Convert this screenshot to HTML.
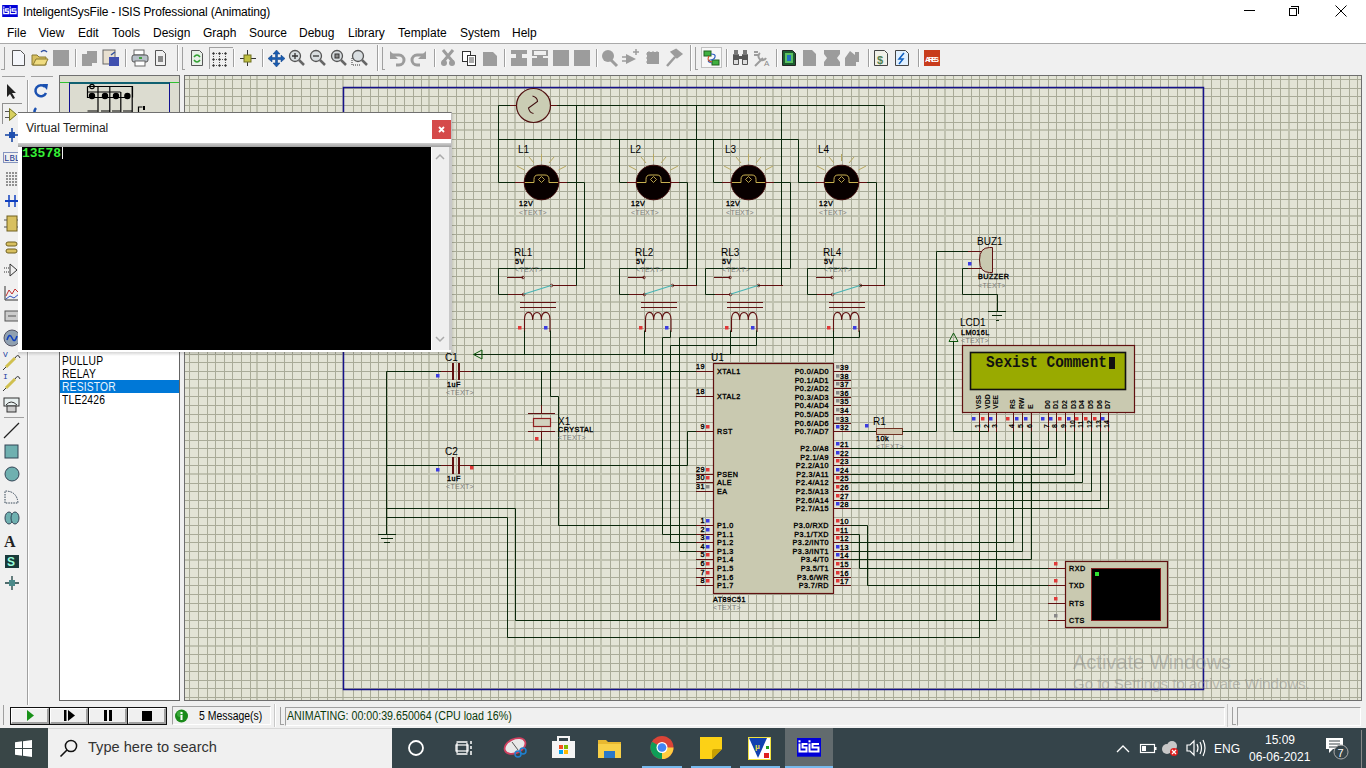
<!DOCTYPE html><html><head><meta charset="utf-8"><style>
*{margin:0;padding:0;box-sizing:border-box}
html,body{width:1366px;height:768px;overflow:hidden;background:#f0f0f0;font-family:"Liberation Sans", sans-serif;position:relative}
.a{position:absolute}
.t{position:absolute;white-space:nowrap;line-height:1}
svg text{font-family:"Liberation Sans", sans-serif}
</style></head><body>
<div class="a" style="left:0;top:0;width:1366px;height:43px;background:#fff"></div><div class="a" style="left:0;top:43px;width:1366px;height:1px;background:#a9a9a9"></div><svg class="a" style="left:2px;top:5px" width="16" height="12" viewBox="0 0 24.25 18.7"><rect width="24.25" height="18.7" fill="#0000d8"/><path d="M2.5 5.5V13.5H9.5V9.5H5.5V6H10.5M12.5 5.5V13.5H21.5V9.5H15.5V6H22" fill="none" stroke="#fff" stroke-width="2"/><rect x="1.5" y="2.3" width="2" height="2" fill="#fff"/><rect x="11.5" y="2.3" width="2" height="2" fill="#fff"/></svg><div class="t" style="left:23px;top:6px;font-size:12px;color:#000;letter-spacing:-0.17px">InteligentSysFile - ISIS Professional (Animating)</div><div class="a" style="left:1244px;top:10px;width:11px;height:1px;background:#000"></div><div class="a" style="left:1291px;top:6px;width:8px;height:8px;border:1px solid #000;border-left:none;border-bottom:none"></div><div class="a" style="left:1289px;top:8px;width:8px;height:8px;border:1px solid #000"></div><svg class="a" style="left:1335px;top:5px" width="12" height="12"><path d="M0.5 .5L11.5 11.5M11.5 .5L.5 11.5" stroke="#000" stroke-width="1"/></svg><div class="t" style="left:7px;top:27px;font-size:12px;color:#000">File</div><div class="t" style="left:38.5px;top:27px;font-size:12px;color:#000">View</div><div class="t" style="left:78px;top:27px;font-size:12px;color:#000">Edit</div><div class="t" style="left:112px;top:27px;font-size:12px;color:#000">Tools</div><div class="t" style="left:153px;top:27px;font-size:12px;color:#000">Design</div><div class="t" style="left:203px;top:27px;font-size:12px;color:#000">Graph</div><div class="t" style="left:249px;top:27px;font-size:12px;color:#000">Source</div><div class="t" style="left:299px;top:27px;font-size:12px;color:#000">Debug</div><div class="t" style="left:348px;top:27px;font-size:12px;color:#000">Library</div><div class="t" style="left:398px;top:27px;font-size:12px;color:#000">Template</div><div class="t" style="left:460px;top:27px;font-size:12px;color:#000">System</div><div class="t" style="left:512px;top:27px;font-size:12px;color:#000">Help</div><div class="a" style="left:184px;top:75px;width:1178px;height:626px;background:#e3e4d6;border:1px solid #6e6e6e"></div><svg class="a" style="left:0;top:0" width="1366" height="768" shape-rendering="crispEdges"><g fill="#c0c2b0"><rect x="256" y="76" width="2" height="624"/><rect x="342" y="76" width="2" height="624"/><rect x="428" y="76" width="2" height="624"/><rect x="514" y="76" width="2" height="624"/><rect x="600" y="76" width="2" height="624"/><rect x="686" y="76" width="2" height="624"/><rect x="772" y="76" width="2" height="624"/><rect x="858" y="76" width="2" height="624"/><rect x="944" y="76" width="2" height="624"/><rect x="1030" y="76" width="2" height="624"/><rect x="1116" y="76" width="2" height="624"/><rect x="1202" y="76" width="2" height="624"/><rect x="1288" y="76" width="2" height="624"/><rect x="185" y="129" width="1176" height="2"/><rect x="185" y="215" width="1176" height="2"/><rect x="185" y="301" width="1176" height="2"/><rect x="185" y="387" width="1176" height="2"/><rect x="185" y="473" width="1176" height="2"/><rect x="185" y="559" width="1176" height="2"/><rect x="185" y="645" width="1176" height="2"/></g><path d="M189.5 76V700M198.5 76V700M207.5 76V700M215.5 76V700M224.5 76V700M232.5 76V700M241.5 76V700M250.5 76V700M267.5 76V700M275.5 76V700M284.5 76V700M292.5 76V700M301.5 76V700M310.5 76V700M318.5 76V700M327.5 76V700M335.5 76V700M353.5 76V700M361.5 76V700M370.5 76V700M378.5 76V700M387.5 76V700M395.5 76V700M404.5 76V700M413.5 76V700M421.5 76V700M438.5 76V700M447.5 76V700M456.5 76V700M464.5 76V700M473.5 76V700M481.5 76V700M490.5 76V700M498.5 76V700M507.5 76V700M524.5 76V700M533.5 76V700M541.5 76V700M550.5 76V700M559.5 76V700M567.5 76V700M576.5 76V700M584.5 76V700M593.5 76V700M610.5 76V700M619.5 76V700M627.5 76V700M636.5 76V700M644.5 76V700M653.5 76V700M662.5 76V700M670.5 76V700M679.5 76V700M696.5 76V700M705.5 76V700M713.5 76V700M722.5 76V700M730.5 76V700M739.5 76V700M748.5 76V700M756.5 76V700M765.5 76V700M781.5 76V700M790.5 76V700M798.5 76V700M807.5 76V700M816.5 76V700M825.5 76V700M833.5 76V700M842.5 76V700M851.5 76V700M868.5 76V700M876.5 76V700M884.5 76V700M893.5 76V700M902.5 76V700M911.5 76V700M919.5 76V700M928.5 76V700M936.5 76V700M953.5 76V700M962.5 76V700M971.5 76V700M979.5 76V700M988.5 76V700M996.5 76V700M1005.5 76V700M1013.5 76V700M1022.5 76V700M1039.5 76V700M1048.5 76V700M1056.5 76V700M1065.5 76V700M1074.5 76V700M1082.5 76V700M1091.5 76V700M1100.5 76V700M1108.5 76V700M1125.5 76V700M1134.5 76V700M1142.5 76V700M1151.5 76V700M1160.5 76V700M1168.5 76V700M1177.5 76V700M1185.5 76V700M1194.5 76V700M1211.5 76V700M1220.5 76V700M1228.5 76V700M1237.5 76V700M1246.5 76V700M1254.5 76V700M1263.5 76V700M1271.5 76V700M1280.5 76V700M1297.5 76V700M1306.5 76V700M1314.5 76V700M1323.5 76V700M1331.5 76V700M1340.5 76V700M1349.5 76V700M1357.5 76V700M185 79.5H1361M185 88.5H1361M185 96.5H1361M185 105.5H1361M185 113.5H1361M185 122.5H1361M185 139.5H1361M185 148.5H1361M185 156.5H1361M185 165.5H1361M185 173.5H1361M185 182.5H1361M185 191.5H1361M185 199.5H1361M185 208.5H1361M185 225.5H1361M185 234.5H1361M185 242.5H1361M185 251.5H1361M185 259.5H1361M185 268.5H1361M185 276.5H1361M185 285.5H1361M185 294.5H1361M185 311.5H1361M185 319.5H1361M185 328.5H1361M185 337.5H1361M185 345.5H1361M185 354.5H1361M185 362.5H1361M185 371.5H1361M185 379.5H1361M185 396.5H1361M185 405.5H1361M185 414.5H1361M185 422.5H1361M185 431.5H1361M185 440.5H1361M185 448.5H1361M185 457.5H1361M185 465.5H1361M185 483.5H1361M185 491.5H1361M185 500.5H1361M185 508.5H1361M185 517.5H1361M185 525.5H1361M185 534.5H1361M185 542.5H1361M185 551.5H1361M185 568.5H1361M185 577.5H1361M185 585.5H1361M185 594.5H1361M185 603.5H1361M185 611.5H1361M185 620.5H1361M185 628.5H1361M185 637.5H1361M185 654.5H1361M185 663.5H1361M185 671.5H1361M185 680.5H1361M185 688.5H1361M185 697.5H1361" stroke="#a9ab98" stroke-width="1" fill="none"/></svg><div class="a" style="left:0;top:44px;width:1366px;height:31px;background:#f0f0f0"></div><svg class="a" style="left:0;top:0" width="960" height="76"><rect x="4" y="47" width="1" height="22" fill="#a0a0a0"/><rect x="1" y="69" width="4" height="1" fill="#a0a0a0"/><rect x="75" y="49" width="1" height="18" fill="#a0a0a0"/><rect x="76" y="49" width="1" height="18" fill="#fff"/><rect x="125" y="49" width="1" height="18" fill="#a0a0a0"/><rect x="126" y="49" width="1" height="18" fill="#fff"/><rect x="233" y="49" width="1" height="18" fill="#a0a0a0"/><rect x="234" y="49" width="1" height="18" fill="#fff"/><rect x="262" y="49" width="1" height="18" fill="#a0a0a0"/><rect x="263" y="49" width="1" height="18" fill="#fff"/><rect x="434" y="49" width="1" height="18" fill="#a0a0a0"/><rect x="435" y="49" width="1" height="18" fill="#fff"/><rect x="504" y="49" width="1" height="18" fill="#a0a0a0"/><rect x="505" y="49" width="1" height="18" fill="#fff"/><rect x="596" y="49" width="1" height="18" fill="#a0a0a0"/><rect x="597" y="49" width="1" height="18" fill="#fff"/><rect x="726" y="49" width="1" height="18" fill="#a0a0a0"/><rect x="727" y="49" width="1" height="18" fill="#fff"/><rect x="776" y="49" width="1" height="18" fill="#a0a0a0"/><rect x="777" y="49" width="1" height="18" fill="#fff"/><rect x="868" y="49" width="1" height="18" fill="#a0a0a0"/><rect x="869" y="49" width="1" height="18" fill="#fff"/><rect x="918" y="49" width="1" height="18" fill="#a0a0a0"/><rect x="919" y="49" width="1" height="18" fill="#fff"/><rect x="177" y="45" width="1" height="26" fill="#a0a0a0"/><rect x="178" y="45" width="1" height="26" fill="#fff"/><rect x="182" y="47" width="1" height="22" fill="#a0a0a0"/><rect x="182" y="69" width="3" height="1" fill="#a0a0a0"/><rect x="377" y="45" width="1" height="26" fill="#a0a0a0"/><rect x="378" y="45" width="1" height="26" fill="#fff"/><rect x="382" y="47" width="1" height="22" fill="#a0a0a0"/><rect x="382" y="69" width="3" height="1" fill="#a0a0a0"/><rect x="690" y="45" width="1" height="26" fill="#a0a0a0"/><rect x="691" y="45" width="1" height="26" fill="#fff"/><rect x="695" y="47" width="1" height="22" fill="#a0a0a0"/><rect x="695" y="69" width="3" height="1" fill="#a0a0a0"/><path d="M12.5 50.5h8l4 4v11h-12z" fill="#f4f6fa" stroke="#555"/><path d="M32 55h5l2 2h7v8H32z" fill="#d8c060" stroke="#8a7a30"/><path d="M33 65l3-6h12l-3 6z" fill="#f0dc80" stroke="#8a7a30"/><path d="M41 52q3-3 6 0" stroke="#3050a0" fill="none" stroke-width="1.5"/><rect x="53" y="50" width="16" height="16" fill="#9c9c9c"/><path d="M82 54h5v-3h10v12h-5v3H82z" fill="#9c9c9c"/><rect x="103" y="50" width="12" height="14" fill="#e8e0d0" stroke="#666"/><rect x="109" y="57" width="10" height="9" fill="#4050b0"/><path d="M111 55l4-3" stroke="#3050a0" stroke-width="1.5"/><rect x="134" y="50" width="10" height="5" fill="#fff" stroke="#666"/><rect x="132" y="55" width="16" height="7" rx="2" fill="#b8c0c8" stroke="#555"/><rect x="135" y="61" width="10" height="5" fill="#fff" stroke="#666"/><rect x="139" y="57" width="3" height="2" fill="#40a040"/><path d="M155.5 50.5h7l3 3v12h-10z" fill="#f0f0f0" stroke="#555"/><rect x="158" y="56" width="5" height="6" fill="#888"/><path d="M191.5 50.5h8l3 3v12h-11z" fill="#e8f0e8" stroke="#555"/><path d="M194 57q3-4 6 0M200 60q-3 4-6 0" stroke="#30a030" stroke-width="1.6" fill="none"/><rect x="209" y="47" width="24" height="1" fill="#a0a0a0"/><rect x="209" y="47" width="1" height="22" fill="#a0a0a0"/><path d="M213.5 52l1.5 1.5-1.5 1.5-1.5-1.5z" fill="#333"/><rect x="216" y="53" width="1" height="1" fill="#555"/><rect x="213" y="56" width="1" height="1" fill="#555"/><path d="M219.5 52l1.5 1.5-1.5 1.5-1.5-1.5z" fill="#333"/><rect x="222" y="53" width="1" height="1" fill="#555"/><rect x="219" y="56" width="1" height="1" fill="#555"/><path d="M225.5 52l1.5 1.5-1.5 1.5-1.5-1.5z" fill="#333"/><rect x="225" y="56" width="1" height="1" fill="#555"/><path d="M213.5 58l1.5 1.5-1.5 1.5-1.5-1.5z" fill="#333"/><rect x="216" y="59" width="1" height="1" fill="#555"/><rect x="213" y="62" width="1" height="1" fill="#555"/><path d="M219.5 58l1.5 1.5-1.5 1.5-1.5-1.5z" fill="#333"/><rect x="222" y="59" width="1" height="1" fill="#555"/><rect x="219" y="62" width="1" height="1" fill="#555"/><path d="M225.5 58l1.5 1.5-1.5 1.5-1.5-1.5z" fill="#333"/><rect x="225" y="62" width="1" height="1" fill="#555"/><path d="M213.5 64l1.5 1.5-1.5 1.5-1.5-1.5z" fill="#333"/><rect x="216" y="65" width="1" height="1" fill="#555"/><path d="M219.5 64l1.5 1.5-1.5 1.5-1.5-1.5z" fill="#333"/><rect x="222" y="65" width="1" height="1" fill="#555"/><path d="M225.5 64l1.5 1.5-1.5 1.5-1.5-1.5z" fill="#333"/><path d="M247.5 50v16M240 58.5h16" stroke="#333" stroke-width="1"/><rect x="244" y="55" width="7" height="7" fill="#c0c040" stroke="#707020"/><path d="M276.5 50l3.5 4h-2.5v3.5h3.5V55l4 3.5-4 3.5v-2.5h-3.5V63h2.5l-3.5 4-3.5-4h2.5v-3.5h-3.5V62l-4-3.5 4-3.5v2.5h3.5V54h-2.5z" fill="#1a5cb0" stroke="#0c3c80" stroke-width=".5"/><circle cx="295" cy="56" r="5.5" fill="#d8dde0" stroke="#555" stroke-width="1.3"/><path d="M299 60l5 5" stroke="#666" stroke-width="2.5"/><path d="M292 56h6M295 53v6" stroke="#333" stroke-width="1.3"/><circle cx="316" cy="56" r="5.5" fill="#d8dde0" stroke="#555" stroke-width="1.3"/><path d="M320 60l5 5" stroke="#666" stroke-width="2.5"/><path d="M313 56h6" stroke="#333" stroke-width="1.3"/><circle cx="337" cy="56" r="5.5" fill="#d8dde0" stroke="#555" stroke-width="1.3"/><path d="M341 60l5 5" stroke="#666" stroke-width="2.5"/><rect x="335" y="54" width="4" height="4" fill="#888" stroke="#333"/><circle cx="358" cy="56" r="5.5" fill="#d8dde0" stroke="#555" stroke-width="1.3"/><path d="M362 60l5 5" stroke="#666" stroke-width="2.5"/><path d="M352 58v7h8" stroke="#333" stroke-dasharray="1 1" fill="none"/><path d="M392 55h7a5 5 0 010 10h-3" stroke="#9c9c9c" stroke-width="3" fill="none"/><path d="M390 51v8h8z" fill="#9c9c9c"/><path d="M424 55h-7a5 5 0 000 10h3" stroke="#9c9c9c" stroke-width="3" fill="none"/><path d="M426 51v8h-8z" fill="#9c9c9c"/><path d="M443 50l10 12M453 50l-10 12" stroke="#9c9c9c" stroke-width="3"/><circle cx="444" cy="63" r="3" fill="#9c9c9c"/><circle cx="452" cy="63" r="3" fill="#9c9c9c"/><rect x="462.5" y="51.5" width="8" height="10" fill="#fff" stroke="#333"/><rect x="467.5" y="55.5" width="8" height="10" fill="#fff" stroke="#333"/><path d="M469 58h5M469 60h5M469 62h5" stroke="#555"/><path d="M483 52h10l4 4v10h-14z" fill="#9c9c9c"/><path d="M511 50h16v4h-5v4h5v8h-16v-8h5v-4h-5z" fill="#9c9c9c"/><path d="M532 50h16v6h-5v2h5v8h-16v-8h5v-2h-5z" fill="#9c9c9c"/><rect x="534" y="51" width="12" height="4" fill="#f0f0f0"/><rect x="553" y="50" width="16" height="16" fill="#9c9c9c"/><rect x="574" y="50" width="16" height="16" fill="#9c9c9c"/><circle cx="608" cy="56" r="6" fill="#9c9c9c"/><path d="M611 60l6 6" stroke="#9c9c9c" stroke-width="3"/><path d="M626 54l10 5-10 5z" fill="#9c9c9c"/><path d="M622 57h4M622 61h4M633 52h6M636 49v6" stroke="#9c9c9c" stroke-width="1.5"/><rect x="647" y="52" width="12" height="12" fill="#9c9c9c"/><path d="M646 54h14M646 58h14M646 62h14M649 51v14M653 51v14M657 51v14" stroke="#9c9c9c" stroke-dasharray="1 1"/><path d="M667 66l8-9M672 52l5 5 4-3-5-4z" stroke="#9c9c9c" stroke-width="2.5" fill="#9c9c9c"/><rect x="701.5" y="47.5" width="20" height="20" fill="#f8f8f8" stroke="#c0c0c0"/><rect x="704" y="51" width="7" height="5" fill="#40b040" stroke="#206020"/><rect x="712" y="60" width="7" height="5" fill="#40b040" stroke="#206020"/><path d="M711 54q5 0 4 3t-5 3q-4 2 2 3" stroke="#3060c0" stroke-width="1.2" fill="none"/><path d="M709 56q-3 5 3 6" stroke="#d05020" stroke-width="1.2" fill="none"/><rect x="733" y="54" width="6" height="11" rx="1" fill="#555"/><rect x="742" y="54" width="6" height="11" rx="1" fill="#555"/><rect x="738" y="56" width="5" height="3" fill="#555"/><rect x="734" y="50" width="4" height="5" fill="#777"/><rect x="743" y="50" width="4" height="5" fill="#777"/><rect x="734" y="60" width="4" height="4" fill="#ddd"/><rect x="743" y="60" width="4" height="4" fill="#ddd"/><path d="M754 52h4M754 55h4M755 66l8-8M760 53a4 4 0 106 5" stroke="#9c9c9c" stroke-width="2" fill="none"/><text x="764" y="66" font-size="8" fill="#888">A</text><path d="M782.5 50.5h10l3 3v12h-13z" fill="#1c5a30" stroke="#222"/><rect x="785" y="53" width="8" height="10" fill="#5ac060"/><rect x="787" y="55" width="4" height="6" fill="#2070c0"/><path d="M803 50h9l4 4v12h-13z" fill="#9c9c9c"/><path d="M824 50h16v4l-3 4 3 4v4h-16v-4l3-4-3-4z" fill="#9c9c9c"/><path d="M845 58l5-7 5 4v-3h4v10h-3v4h-11z" fill="#9c9c9c"/><path d="M874.5 50.5h10l3 3v12h-13z" fill="#f0f0e8" stroke="#444"/><text x="877" y="64" font-size="11" fill="#508050" font-weight="bold">$</text><path d="M895.5 50.5h10l3 3v12h-13z" fill="#e0f0ff" stroke="#444"/><path d="M904 53l-5 6h4l-4 5" stroke="#1060c0" stroke-width="1.5" fill="none"/><rect x="924" y="50" width="16" height="16" fill="#c83c1c"/><text x="925" y="62" font-size="7.5" fill="#fff" font-weight="bold" textLength="14">ARES</text></svg><div class="a" style="left:2px;top:76px;width:23px;height:1px;background:#a0a0a0"></div><div class="a" style="left:31px;top:76px;width:22px;height:1px;background:#a0a0a0"></div><div class="a" style="left:27px;top:80px;width:1px;height:625px;background:#a0a0a0"></div><div class="a" style="left:28px;top:80px;width:1px;height:625px;background:#fff"></div><div class="a" style="left:59px;top:75px;width:121px;height:60px;background:#dcdcd0;border:1px solid #707070"></div><div class="a" style="left:60px;top:82px;width:119px;height:1px;background:#30c030"></div><div class="a" style="left:69px;top:82px;width:101px;height:40px;border:1px solid #101090;border-top:2px solid #106070;border-bottom:none"></div><svg class="a" style="left:0;top:0" width="180" height="115"><g stroke="#000" fill="none" stroke-width="1.2"><path d="M87.5 86.5h45v11M87.5 86.5v11h41M87.5 92h33M98 86.5v26M109.8 86.5v26M120.8 92v20.5M132.2 86.5v26"/><circle cx="92" cy="86.5" r="2.2"/><circle cx="92" cy="96" r="2.6" fill="#000"/><circle cx="105" cy="96" r="2.6" fill="#000"/><circle cx="116" cy="96" r="2.6" fill="#000"/><circle cx="127.4" cy="96" r="2.6" fill="#000"/><path d="M87.5 111h10M101 111h9M112 111h8M123 111h9M138.5 112v-5h4"/></g><rect x="143" y="106" width="2" height="4" fill="#000"/></svg><div class="a" style="left:59px;top:200px;width:121px;height:501px;background:#fff;border:1px solid #646464"></div><div class="a" style="left:60px;top:380px;width:119px;height:13px;background:#0078d7"></div><div class="t" style="left:62px;top:355px;font-size:12px;color:#000;letter-spacing:0.2px;transform:scaleX(0.86);transform-origin:0 0">PULLUP</div><div class="t" style="left:62px;top:368px;font-size:12px;color:#000;letter-spacing:0.2px;transform:scaleX(0.86);transform-origin:0 0">RELAY</div><div class="t" style="left:62px;top:381px;font-size:12px;color:#e8f4ff;letter-spacing:0.2px;transform:scaleX(0.86);transform-origin:0 0">RESISTOR</div><div class="t" style="left:62px;top:394px;font-size:12px;color:#000;letter-spacing:0.2px;transform:scaleX(0.86);transform-origin:0 0">TLE2426</div><svg class="a" style="left:0;top:0" width="60" height="600"><path d="M7 84l0 13 3-3 3 5 2-1-3-5h4z" fill="#222"/><rect x="2" y="103" width="20" height="1" fill="#909090"/><rect x="2" y="103" width="1" height="21" fill="#909090"/><path d="M9.5 108.5l7 6-7 6z" fill="#d8d060" stroke="#707020"/><path d="M5 111.5h4M5 117.5h4" stroke="#555"/><path d="M12 128v14M5 135h14" stroke="#1040a0" stroke-width="1.5"/><rect x="9" y="132" width="6" height="6" fill="#2050b0"/><text x="4" y="161" font-size="9" fill="#1a3a90" style="font-family:&quot;Liberation Mono&quot;">LBL</text><rect x="3.5" y="152.5" width="18" height="10" fill="none" stroke="#1a3a90" stroke-dasharray="1 1"/><path d="M6 173h12M6 176h12M6 179h12M6 182h12M6 185h12" stroke="#333" stroke-dasharray="2 1"/><path d="M5 201h15" stroke="#1040c0" stroke-width="2"/><path d="M9 195v12M15 195v12" stroke="#1040c0" stroke-width="1.5"/><rect x="7" y="216" width="10" height="15" fill="#d8c060" stroke="#706020"/><path d="M4 220h3M4 227h3M17 220h3M17 227h3" stroke="#555"/><rect x="6" y="242" width="11" height="4" rx="2" fill="#d8c060" stroke="#706020"/><rect x="6" y="249" width="11" height="4" rx="2" fill="#d8c060" stroke="#706020"/><path d="M10 264l7 6-7 6z" fill="none" stroke="#333"/><path d="M4 268h5M4 272h5" stroke="#333" stroke-dasharray="1 1"/><path d="M5 286v14h15" stroke="#333" fill="none"/><path d="M6 296l3-6 3 4 3-5 3 3" stroke="#c03030" fill="none"/><path d="M6 299l4-3 4 2 5-4" stroke="#3050c0" fill="none"/><rect x="5" y="311" width="15" height="10" fill="#ccc" stroke="#555"/><path d="M8 316h8" stroke="#555"/><circle cx="12" cy="338" r="8" fill="#90a0b0" stroke="#556"/><path d="M7 340q2.5-8 5-2t5-2" stroke="#1040c0" stroke-width="1.5" fill="none"/><text x="3" y="357" font-size="8" fill="#2040a0" style="font-family:&quot;Liberation Mono&quot;">V</text><path d="M6 367l9-9" stroke="#d0c050" stroke-width="3"/><path d="M3 370l3-3M15 358q3-5 5 0" stroke="#333" fill="none"/><text x="3" y="379" font-size="8" fill="#2040a0" style="font-family:&quot;Liberation Mono&quot;">I</text><path d="M6 388l9-9" stroke="#d0c050" stroke-width="3"/><path d="M3 391l3-3M15 379q3-5 5 0" stroke="#333" fill="none"/><rect x="4" y="398" width="15" height="8" fill="#e8f0f0" stroke="#333"/><path d="M6 405q5-6 11 0" stroke="#333" fill="none"/><rect x="7" y="406" width="9" height="6" fill="#ccc" stroke="#333"/><rect x="4" y="417" width="20" height="1" fill="#a0a0a0"/><path d="M4 438l15-15" stroke="#222" stroke-width="1.3"/><rect x="5" y="445" width="13" height="13" fill="#6fb0b0" stroke="#345"/><circle cx="12" cy="474" r="7" fill="#6fb0b0" stroke="#345"/><path d="M5 503v-12q12 0 13 12z" fill="none" stroke="#345" stroke-dasharray="1.5 1"/><ellipse cx="9" cy="518" rx="4" ry="6" fill="#6fb0b0" stroke="#345"/><ellipse cx="15" cy="518" rx="4" ry="6" fill="#6fb0b0" stroke="#345"/><text x="4" y="547" font-size="16" font-weight="bold" style="font-family:&quot;Liberation Serif&quot;" fill="#222">A</text><rect x="5" y="555" width="14" height="13" fill="#1a3a3a"/><text x="7" y="566" font-size="12" font-weight="bold" fill="#9fd">S</text><path d="M12 576v14M5 583h14" stroke="#1a4040" stroke-width="1.3"/><rect x="9" y="580" width="6" height="6" fill="#4a8a8a"/><path d="M45 87a5.5 5.5 0 10 1 6" stroke="#1a50b0" stroke-width="2.5" fill="none"/><path d="M42 84l6 0-1 6z" fill="#1a50b0"/><path d="M35 114a5.5 5.5 0 011-6" stroke="#1a50b0" stroke-width="2.5" fill="none"/></svg><div class="a" style="left:3px;top:705px;width:1px;height:20px;background:#a0a0a0"></div><div class="a" style="left:10px;top:707px;width:157px;height:18px;background:#111"></div><div class="a" style="left:11px;top:708px;width:38px;height:16px;background:#f0f0f0;border-top:1px solid #fff;border-left:1px solid #fff;border-bottom:2px solid #a0a0a0;border-right:2px solid #a0a0a0"></div><div class="a" style="left:50px;top:708px;width:38px;height:16px;background:#f0f0f0;border-top:1px solid #fff;border-left:1px solid #fff;border-bottom:2px solid #a0a0a0;border-right:2px solid #a0a0a0"></div><div class="a" style="left:89px;top:708px;width:38px;height:16px;background:#f0f0f0;border-top:1px solid #fff;border-left:1px solid #fff;border-bottom:2px solid #a0a0a0;border-right:2px solid #a0a0a0"></div><div class="a" style="left:128px;top:708px;width:38px;height:16px;background:#f0f0f0;border-top:1px solid #fff;border-left:1px solid #fff;border-bottom:2px solid #a0a0a0;border-right:2px solid #a0a0a0"></div><svg class="a" style="left:0;top:700px" width="170" height="28"><path d="M27 10l7 5.5-7 5.5z" fill="#189018"/><rect x="64" y="10" width="2.5" height="11" fill="#000"/><path d="M68 10l7 5.5-7 5.5z" fill="#000"/><rect x="104" y="10" width="3" height="11" fill="#000"/><rect x="109" y="10" width="3" height="11" fill="#000"/><rect x="142" y="11" width="10" height="10" fill="#000"/></svg><div class="a" style="left:172px;top:706px;width:99px;height:19px;border-top:1px solid #a0a0a0;border-left:1px solid #a0a0a0;border-bottom:1px solid #fff;border-right:1px solid #fff"></div><svg class="a" style="left:174px;top:708px" width="16" height="16"><circle cx="7.5" cy="8" r="6.5" fill="#1a8a1a"/><circle cx="6" cy="6" r="3" fill="#50c050" opacity=".6"/><rect x="6.5" y="7" width="2" height="5" fill="#fff"/><rect x="6.5" y="4" width="2" height="2" fill="#fff"/></svg><div class="t" style="left:199px;top:710px;font-size:12px;color:#000;transform:scaleX(0.87);transform-origin:0 0">5 Message(s)</div><div class="a" style="left:275px;top:704px;width:1px;height:23px;background:#fff"></div><div class="a" style="left:274px;top:704px;width:1px;height:23px;background:#c8c8c8"></div><div class="a" style="left:280px;top:707px;width:1px;height:18px;background:#a0a0a0"></div><div class="a" style="left:280px;top:724px;width:4px;height:1px;background:#a0a0a0"></div><div class="a" style="left:285px;top:707px;width:940px;height:19px;border-top:1px solid #a0a0a0;border-left:1px solid #a0a0a0;border-bottom:1px solid #fff;border-right:1px solid #fff"></div><div class="t" style="left:287px;top:710px;font-size:12px;color:#0a3a0a;transform:scaleX(0.89);transform-origin:0 0">ANIMATING: 00:00:39.650064 (CPU load 16%)</div><div class="a" style="left:1227px;top:704px;width:1px;height:23px;background:#c8c8c8"></div><div class="a" style="left:1232px;top:707px;width:1px;height:18px;background:#a0a0a0"></div><div class="a" style="left:1232px;top:724px;width:4px;height:1px;background:#a0a0a0"></div><div class="a" style="left:1237px;top:707px;width:124px;height:19px;border-top:1px solid #a0a0a0;border-left:1px solid #a0a0a0;border-bottom:1px solid #fff;border-right:1px solid #fff"></div><div class="a" style="left:0;top:728px;width:1366px;height:40px;background:#35444a"></div><div class="a" style="left:0;top:728px;width:48px;height:40px;background:#394647"></div><svg class="a" style="left:15px;top:740px" width="18" height="17"><path d="M0 2.3L7 1.3V8H0zM8 1.2L17 0V8H8zM0 9h7v6.7L0 14.7zM8 9h9v8l-9-1.2z" fill="#fff"/></svg><div class="a" style="left:48px;top:728px;width:344px;height:40px;background:#f0f0f0;border-top:1px solid #d8d8d8"></div><svg class="a" style="left:58px;top:738px" width="22" height="22"><circle cx="13" cy="8" r="5.6" fill="none" stroke="#111" stroke-width="1.5"/><path d="M9 12L2.5 18.5" stroke="#111" stroke-width="1.6"/></svg><div class="t" style="left:88px;top:740px;font-size:14.6px;color:#333">Type here to search</div><svg class="a" style="left:400px;top:730px" width="480" height="38"><circle cx="16" cy="18" r="7" fill="none" stroke="#fff" stroke-width="1.8"/><path d="M56.5 12h11M56.5 24h11M57 13v10M67 13v10" stroke="#fff" stroke-width="1.3" fill="none"/><rect x="56" y="15" width="12" height="6" fill="none" stroke="#fff" stroke-width="1.2"/><path d="M71 11v3M71 16v3M71 21v4" stroke="#fff" stroke-width="1.5"/><ellipse cx="115" cy="16" rx="11" ry="7" fill="#e8e8e8" stroke="#d04060" stroke-width="1.8" transform="rotate(-25 115 16)"/><path d="M112 12l6 8" stroke="#555"/><circle cx="118" cy="24" r="3" fill="none" stroke="#2080d0" stroke-width="1.5"/><circle cx="123" cy="21" r="3" fill="none" stroke="#2080d0" stroke-width="1.5"/><rect x="152" y="11" width="23" height="17" fill="#f4f4f4"/><path d="M158 11v-4h11v4" stroke="#f4f4f4" stroke-width="2" fill="none"/><rect x="159" y="15" width="4" height="4" fill="#f25022"/><rect x="164" y="15" width="4" height="4" fill="#7fba00"/><rect x="159" y="20" width="4" height="4" fill="#00a4ef"/><rect x="164" y="20" width="4" height="4" fill="#ffb900"/><path d="M198 10h8l2 2h13v16h-23z" fill="#e8b830"/><rect x="198" y="14" width="23" height="14" fill="#f8d048"/><rect x="204" y="21" width="11" height="7" fill="#2a78c8"/></svg><svg class="a" style="left:640px;top:730px" width="200" height="38"><circle cx="22" cy="17.5" r="11.5" fill="#db4437"/><path d="M22 17.5L12.04 23.25A11.5 11.5 0 0 0 22 29z" fill="#0f9d58"/><path d="M22 17.5L12.04 11.75A11.5 11.5 0 0 0 12.04 23.25 L22 29 A11.5 11.5 0 0 0 22 29z" fill="#0f9d58"/><path d="M22 17.5 L33.5 17.5 A11.5 11.5 0 0 1 22 29z" fill="#ffcd40"/><circle cx="22" cy="17.5" r="5.5" fill="#fff"/><circle cx="22" cy="17.5" r="4.3" fill="#4285f4"/><rect x="60" y="7" width="22" height="22" fill="#fcd116"/><path d="M82 19v10H72z" fill="#35444a"/><path d="M72 29l10-10h-8a2 2 0 0 0-2 2z" fill="#c8a000"/><rect x="108" y="7" width="23" height="23" fill="#f0e040"/><rect x="109" y="8" width="21" height="21" fill="#fff"/><path d="M109 8h18l-9 20z" fill="#1040b0"/><text x="115" y="19" font-size="8" fill="#f0e040" font-weight="bold">μ</text><rect x="124" y="23" width="5" height="5" fill="#e02020"/><rect x="126" y="16" width="3" height="3" fill="#20a020"/></svg><div class="a" style="left:785px;top:728px;width:48px;height:40px;background:#626b6e"></div><svg class="a" style="left:797px;top:738px" width="24.25" height="18.7" viewBox="0 0 24.25 18.7"><rect width="24.25" height="18.7" fill="#0000d8"/><path d="M2.5 5.5V13.5H9.5V9.5H5.5V6H10.5M12.5 5.5V13.5H21.5V9.5H15.5V6H22" fill="none" stroke="#fff" stroke-width="2"/><rect x="1.5" y="2.3" width="2" height="2" fill="#fff"/><rect x="11.5" y="2.3" width="2" height="2" fill="#fff"/></svg><div class="a" style="left:642px;top:766px;width:40px;height:2px;background:#76b9ed"></div><div class="a" style="left:691px;top:766px;width:40px;height:2px;background:#76b9ed"></div><div class="a" style="left:740px;top:766px;width:40px;height:2px;background:#76b9ed"></div><div class="a" style="left:785px;top:766px;width:48px;height:2px;background:#76b9ed"></div><svg class="a" style="left:1110px;top:730px" width="256" height="38"><path d="M7 22l6-6 6 6" stroke="#fff" stroke-width="1.3" fill="none"/><rect x="30.5" y="14.5" width="14" height="8" fill="none" stroke="#fff" stroke-width="1.2"/><rect x="45" y="17" width="1.5" height="3" fill="#fff"/><rect x="32" y="16" width="4" height="5" fill="#fff"/><circle cx="57" cy="19" r="5" fill="#c8c8c8"/><circle cx="62" cy="16" r="5" fill="#c8c8c8"/><circle cx="64" cy="22" r="4" fill="#e02020"/><path d="M62 20l4 4M66 20l-4 4" stroke="#fff" stroke-width="1.2"/><path d="M77 15h3l4-4v14l-4-4h-3z" fill="none" stroke="#fff" stroke-width="1.2"/><path d="M87 14q2 4 0 8M90 12q3 6 0 12M93 10q4 8 0 16" stroke="#fff" stroke-width="1.2" fill="none"/><text x="104" y="23" font-size="12" fill="#fff">ENG</text><text x="155" y="14" font-size="12" fill="#fff">15:09</text><text x="139" y="31" font-size="12" fill="#fff">06-06-2021</text><path d="M216 8h17v11h-10l-4 4v-4h-3z" fill="#fff"/><path d="M219 11h11M219 14h11M219 17h8" stroke="#3a464b" stroke-width="1"/><circle cx="231" cy="22" r="7" fill="#35444a" stroke="#aaa" stroke-width="1"/><text x="227.5" y="27" font-size="11" fill="#fff">7</text><rect x="251" y="0" width="1" height="38" fill="#888"/></svg><svg class="a" style="left:0;top:0" width="1366" height="768"><defs><clipPath id="cv"><rect x="185" y="76" width="1176" height="624"/></clipPath></defs><g clip-path="url(#cv)"><rect x="343.5" y="87.5" width="860" height="602" fill="none" stroke="#16128a" stroke-width="1.5"/><path d="M498.5 105.5 L516.5 105.5" stroke="#0b280b" fill="none" stroke-width="1"/><path d="M550.5 105.5 L884.5 105.5 L884.5 285.5 L859.5 285.5" stroke="#0b280b" fill="none" stroke-width="1"/><path d="M498.5 105.5 L498.5 182.5 L524.5 182.5" stroke="#0b280b" fill="none" stroke-width="1"/><path d="M498.5 139.5 L798.5 139.5 L798.5 182.5 L825.5 182.5" stroke="#0b280b" fill="none" stroke-width="1"/><path d="M576.5 105.5 L576.5 285.5 L552.5 285.5" stroke="#0b280b" fill="none" stroke-width="1"/><path d="M558.5 182.5 L584.5 182.5 L584.5 268.5 L498.5 268.5 L498.5 294.5 L523.5 294.5" stroke="#0b280b" fill="none" stroke-width="1"/><path d="M619.5 139.5 L619.5 182.5 L636.5 182.5" stroke="#0b280b" fill="none" stroke-width="1"/><path d="M670.5 182.5 L687.5 182.5 L687.5 268.5 L619.5 268.5 L619.5 294.5 L644.5 294.5" stroke="#0b280b" fill="none" stroke-width="1"/><path d="M696.5 105.5 L696.5 285.5 L672.5 285.5" stroke="#0b280b" fill="none" stroke-width="1"/><path d="M713.5 139.5 L713.5 182.5 L731.5 182.5" stroke="#0b280b" fill="none" stroke-width="1"/><path d="M765.5 182.5 L790.5 182.5 L790.5 268.5 L705.5 268.5 L705.5 294.5 L729.5 294.5" stroke="#0b280b" fill="none" stroke-width="1"/><path d="M781.5 105.5 L781.5 285.5 L757.5 285.5" stroke="#0b280b" fill="none" stroke-width="1"/><path d="M858.5 182.5 L876.5 182.5 L876.5 268.5 L807.5 268.5 L807.5 294.5 L831.5 294.5" stroke="#0b280b" fill="none" stroke-width="1"/><circle cx="533.5" cy="105.5" r="17" fill="#cacdb4" stroke="#501010" stroke-width="1.2"/><path d="M532.5 96q5 1.5 5 5.5L528.5 108q1 5 5 5.5" fill="none" stroke="#401010" stroke-width="1.1"/><rect x="510" y="105" width="7" height="1" fill="#601010"/><rect x="550" y="105" width="7" height="1" fill="#601010"/><circle cx="541.5" cy="182.5" r="17.3" fill="#080000" stroke="#3a0808" stroke-width="1"/><path d="M524.5 182.5h9.5v-3q0-4.5 4-4.5h7q4 0 4 4.5v3h9.5" fill="none" stroke="#c8b050" stroke-width="1"/><path d="M541.5 176.5l3 3-3 3-3-3z" fill="none" stroke="#c8b050" stroke-width=".9"/><path d="M541.5 154v7M529.0 157l5 6M554.0 157l-5 6M517.0 166l7.5 4M566.0 166l-7.5 4" stroke="#b8a860" stroke-width="1"/><rect x="515" y="182" width="10" height="1" fill="#601010"/><rect x="558" y="182" width="9" height="1" fill="#601010"/><text x="518" y="153" font-size="10" fill="#000" font-weight="normal" text-anchor="start" >L1</text><text x="519" y="206" font-size="7.2" fill="#000" stroke="#000" stroke-width="0.35" text-anchor="start" letter-spacing="0.45">12V</text><text x="519" y="215" font-size="7" fill="#7c7c7c" letter-spacing="0.3">&lt;TEXT&gt;</text><circle cx="653.5" cy="182.5" r="17.3" fill="#080000" stroke="#3a0808" stroke-width="1"/><path d="M636.5 182.5h9.5v-3q0-4.5 4-4.5h7q4 0 4 4.5v3h9.5" fill="none" stroke="#c8b050" stroke-width="1"/><path d="M653.5 176.5l3 3-3 3-3-3z" fill="none" stroke="#c8b050" stroke-width=".9"/><path d="M653.5 154v7M641.0 157l5 6M666.0 157l-5 6M629.0 166l7.5 4M678.0 166l-7.5 4" stroke="#b8a860" stroke-width="1"/><rect x="627" y="182" width="10" height="1" fill="#601010"/><rect x="670" y="182" width="9" height="1" fill="#601010"/><text x="630" y="153" font-size="10" fill="#000" font-weight="normal" text-anchor="start" >L2</text><text x="631" y="206" font-size="7.2" fill="#000" stroke="#000" stroke-width="0.35" text-anchor="start" letter-spacing="0.45">12V</text><text x="631" y="215" font-size="7" fill="#7c7c7c" letter-spacing="0.3">&lt;TEXT&gt;</text><circle cx="748.5" cy="182.5" r="17.3" fill="#080000" stroke="#3a0808" stroke-width="1"/><path d="M731.5 182.5h9.5v-3q0-4.5 4-4.5h7q4 0 4 4.5v3h9.5" fill="none" stroke="#c8b050" stroke-width="1"/><path d="M748.5 176.5l3 3-3 3-3-3z" fill="none" stroke="#c8b050" stroke-width=".9"/><path d="M748.5 154v7M736.0 157l5 6M761.0 157l-5 6M724.0 166l7.5 4M773.0 166l-7.5 4" stroke="#b8a860" stroke-width="1"/><rect x="722" y="182" width="10" height="1" fill="#601010"/><rect x="765" y="182" width="9" height="1" fill="#601010"/><text x="725" y="153" font-size="10" fill="#000" font-weight="normal" text-anchor="start" >L3</text><text x="726" y="206" font-size="7.2" fill="#000" stroke="#000" stroke-width="0.35" text-anchor="start" letter-spacing="0.45">12V</text><text x="726" y="215" font-size="7" fill="#7c7c7c" letter-spacing="0.3">&lt;TEXT&gt;</text><circle cx="841.5" cy="182.5" r="17.3" fill="#080000" stroke="#3a0808" stroke-width="1"/><path d="M824.5 182.5h9.5v-3q0-4.5 4-4.5h7q4 0 4 4.5v3h9.5" fill="none" stroke="#c8b050" stroke-width="1"/><path d="M841.5 176.5l3 3-3 3-3-3z" fill="none" stroke="#c8b050" stroke-width=".9"/><path d="M841.5 154v7M829.0 157l5 6M854.0 157l-5 6M817.0 166l7.5 4M866.0 166l-7.5 4" stroke="#b8a860" stroke-width="1"/><rect x="815" y="182" width="10" height="1" fill="#601010"/><rect x="858" y="182" width="9" height="1" fill="#601010"/><text x="818" y="153" font-size="10" fill="#000" font-weight="normal" text-anchor="start" >L4</text><text x="819" y="206" font-size="7.2" fill="#000" stroke="#000" stroke-width="0.35" text-anchor="start" letter-spacing="0.45">12V</text><text x="819" y="215" font-size="7" fill="#7c7c7c" letter-spacing="0.3">&lt;TEXT&gt;</text><text x="514" y="256" font-size="10" fill="#000" font-weight="normal" text-anchor="start" >RL1</text><text x="515" y="264" font-size="7.2" fill="#000" stroke="#000" stroke-width="0.35" text-anchor="start" letter-spacing="0.45">5V</text><text x="515" y="272" font-size="7" fill="#7c7c7c" letter-spacing="0.3">&lt;TEXT&gt;</text><rect x="507" y="277" width="16" height="1" fill="#601010"/><circle cx="523" cy="277.5" r="1.3" fill="none" stroke="#601010" stroke-width=".8"/><rect x="508" y="294" width="15" height="1" fill="#601010"/><circle cx="523.5" cy="294.5" r="1.3" fill="none" stroke="#601010" stroke-width=".8"/><circle cx="551.5" cy="285.5" r="1.3" fill="none" stroke="#601010" stroke-width=".8"/><rect x="553" y="285" width="23" height="1" fill="#601010"/><path d="M524 294L551 285.5" stroke="#48b4b4" stroke-width="1.2"/><rect x="520" y="302" width="36" height="1" fill="#601010"/><rect x="520" y="307" width="36" height="1" fill="#601010"/><path d="M524.5 332V319C524.5 310 532.7 310 532.7 320C532.7 310 541.3 310 541.3 320C541.3 310 550 310 550 319V332" fill="none" stroke="#601010" stroke-width="1.1"/><rect x="518" y="326" width="3.5" height="3.5" fill="#e03838"/><rect x="544" y="326" width="3.5" height="3.5" fill="#3c3ce0"/><text x="635" y="256" font-size="10" fill="#000" font-weight="normal" text-anchor="start" >RL2</text><text x="636" y="264" font-size="7.2" fill="#000" stroke="#000" stroke-width="0.35" text-anchor="start" letter-spacing="0.45">5V</text><text x="636" y="272" font-size="7" fill="#7c7c7c" letter-spacing="0.3">&lt;TEXT&gt;</text><rect x="628" y="277" width="16" height="1" fill="#601010"/><circle cx="644" cy="277.5" r="1.3" fill="none" stroke="#601010" stroke-width=".8"/><rect x="629" y="294" width="15" height="1" fill="#601010"/><circle cx="644.5" cy="294.5" r="1.3" fill="none" stroke="#601010" stroke-width=".8"/><circle cx="672.5" cy="285.5" r="1.3" fill="none" stroke="#601010" stroke-width=".8"/><rect x="674" y="285" width="23" height="1" fill="#601010"/><path d="M645 294L672 285.5" stroke="#48b4b4" stroke-width="1.2"/><rect x="641" y="302" width="36" height="1" fill="#601010"/><rect x="641" y="307" width="36" height="1" fill="#601010"/><path d="M645.5 332V319C645.5 310 653.7 310 653.7 320C653.7 310 662.3 310 662.3 320C662.3 310 671 310 671 319V332" fill="none" stroke="#601010" stroke-width="1.1"/><rect x="639" y="326" width="3.5" height="3.5" fill="#e03838"/><rect x="665" y="326" width="3.5" height="3.5" fill="#3c3ce0"/><text x="721" y="256" font-size="10" fill="#000" font-weight="normal" text-anchor="start" >RL3</text><text x="722" y="264" font-size="7.2" fill="#000" stroke="#000" stroke-width="0.35" text-anchor="start" letter-spacing="0.45">5V</text><text x="722" y="272" font-size="7" fill="#7c7c7c" letter-spacing="0.3">&lt;TEXT&gt;</text><rect x="714" y="277" width="16" height="1" fill="#601010"/><circle cx="730" cy="277.5" r="1.3" fill="none" stroke="#601010" stroke-width=".8"/><rect x="715" y="294" width="15" height="1" fill="#601010"/><circle cx="730.5" cy="294.5" r="1.3" fill="none" stroke="#601010" stroke-width=".8"/><circle cx="758.5" cy="285.5" r="1.3" fill="none" stroke="#601010" stroke-width=".8"/><rect x="760" y="285" width="23" height="1" fill="#601010"/><path d="M731 294L758 285.5" stroke="#48b4b4" stroke-width="1.2"/><rect x="727" y="302" width="36" height="1" fill="#601010"/><rect x="727" y="307" width="36" height="1" fill="#601010"/><path d="M731.5 332V319C731.5 310 739.7 310 739.7 320C739.7 310 748.3 310 748.3 320C748.3 310 757 310 757 319V332" fill="none" stroke="#601010" stroke-width="1.1"/><rect x="725" y="326" width="3.5" height="3.5" fill="#e03838"/><rect x="751" y="326" width="3.5" height="3.5" fill="#3c3ce0"/><text x="823" y="256" font-size="10" fill="#000" font-weight="normal" text-anchor="start" >RL4</text><text x="824" y="264" font-size="7.2" fill="#000" stroke="#000" stroke-width="0.35" text-anchor="start" letter-spacing="0.45">5V</text><text x="824" y="272" font-size="7" fill="#7c7c7c" letter-spacing="0.3">&lt;TEXT&gt;</text><rect x="816" y="277" width="16" height="1" fill="#601010"/><circle cx="832" cy="277.5" r="1.3" fill="none" stroke="#601010" stroke-width=".8"/><rect x="817" y="294" width="15" height="1" fill="#601010"/><circle cx="832.5" cy="294.5" r="1.3" fill="none" stroke="#601010" stroke-width=".8"/><circle cx="860.5" cy="285.5" r="1.3" fill="none" stroke="#601010" stroke-width=".8"/><rect x="862" y="285" width="23" height="1" fill="#601010"/><path d="M833 294L860 285.5" stroke="#48b4b4" stroke-width="1.2"/><rect x="829" y="302" width="36" height="1" fill="#601010"/><rect x="829" y="307" width="36" height="1" fill="#601010"/><path d="M833.5 332V319C833.5 310 841.7 310 841.7 320C841.7 310 850.3 310 850.3 320C850.3 310 859 310 859 319V332" fill="none" stroke="#601010" stroke-width="1.1"/><rect x="827" y="326" width="3.5" height="3.5" fill="#e03838"/><rect x="853" y="326" width="3.5" height="3.5" fill="#3c3ce0"/><path d="M524.5 330.5 L524.5 354.5" stroke="#0b280b" fill="none" stroke-width="1"/><path d="M644.5 330.5 L644.5 354.5" stroke="#0b280b" fill="none" stroke-width="1"/><path d="M730.5 330.5 L730.5 354.5" stroke="#0b280b" fill="none" stroke-width="1"/><path d="M833.5 330.5 L833.5 354.5" stroke="#0b280b" fill="none" stroke-width="1"/><path d="M473.5 354.5 L833.5 354.5" stroke="#0b280b" fill="none" stroke-width="1"/><path d="M473.5 354.5L482 350V359z" fill="none" stroke="#0d5a0d" stroke-width="1"/><path d="M550.5 330.5 L550.5 396.5 L558.5 396.5 L558.5 525.5 L696.5 525.5" stroke="#0b280b" fill="none" stroke-width="1"/><path d="M670.5 330.5 L670.5 337.5 L662.5 337.5 L662.5 534.5 L696.5 534.5" stroke="#0b280b" fill="none" stroke-width="1"/><path d="M756.5 330.5 L756.5 345.5 L670.5 345.5 L670.5 542.5 L696.5 542.5" stroke="#0b280b" fill="none" stroke-width="1"/><path d="M859.5 330.5 L859.5 337.5 L679.5 337.5 L679.5 551.5 L696.5 551.5" stroke="#0b280b" fill="none" stroke-width="1"/><path d="M386.5 371.5 L441.5 371.5" stroke="#0b280b" fill="none" stroke-width="1"/><path d="M470.5 371.5 L696.5 371.5" stroke="#0b280b" fill="none" stroke-width="1"/><path d="M386.5 371.5 L386.5 534.5" stroke="#0b280b" fill="none" stroke-width="1"/><path d="M386.5 465.5 L441.5 465.5" stroke="#0b280b" fill="none" stroke-width="1"/><path d="M470.5 465.5 L687.5 465.5 L687.5 431.5 L696.5 431.5" stroke="#0b280b" fill="none" stroke-width="1"/><path d="M541.5 371.5 L541.5 405.5" stroke="#0b280b" fill="none" stroke-width="1"/><path d="M541.5 438.5 L541.5 465.5" stroke="#0b280b" fill="none" stroke-width="1"/><rect x="378" y="534" width="18" height="1" fill="#0b280b"/><rect x="381" y="538" width="12" height="1" fill="#0b280b"/><rect x="384" y="542" width="6" height="1" fill="#0b280b"/><rect x="441" y="371" width="13" height="1" fill="#601010"/><rect x="459" y="371" width="12" height="1" fill="#601010"/><rect x="452" y="363" width="2" height="17" fill="#601010"/><rect x="458" y="363" width="2" height="17" fill="#601010"/><text x="445" y="361" font-size="10" fill="#000" font-weight="normal" text-anchor="start" >C1</text><text x="447" y="387" font-size="7.2" fill="#000" stroke="#000" stroke-width="0.35" text-anchor="start" letter-spacing="0.45">1uF</text><text x="446" y="395" font-size="7" fill="#7c7c7c" letter-spacing="0.3">&lt;TEXT&gt;</text><rect x="436" y="374" width="3.5" height="3.5" fill="#3c3ce0"/><rect x="441" y="465" width="13" height="1" fill="#601010"/><rect x="459" y="465" width="12" height="1" fill="#601010"/><rect x="452" y="457" width="2" height="17" fill="#601010"/><rect x="458" y="457" width="2" height="17" fill="#601010"/><text x="445" y="455" font-size="10" fill="#000" font-weight="normal" text-anchor="start" >C2</text><text x="447" y="481" font-size="7.2" fill="#000" stroke="#000" stroke-width="0.35" text-anchor="start" letter-spacing="0.45">1uF</text><text x="446" y="489" font-size="7" fill="#7c7c7c" letter-spacing="0.3">&lt;TEXT&gt;</text><rect x="436" y="468" width="3.5" height="3.5" fill="#3c3ce0"/><rect x="470" y="466" width="3.5" height="3.5" fill="#e03838"/><rect x="541" y="405" width="1" height="8" fill="#601010"/><rect x="541" y="432" width="1" height="7" fill="#601010"/><rect x="528" y="413" width="27" height="1" fill="#601010"/><rect x="528" y="431" width="27" height="1" fill="#601010"/><rect x="533.5" y="418.5" width="17" height="8" fill="#d2d2be" stroke="#902020" stroke-width="1.2"/><text x="558" y="425" font-size="10" fill="#000" font-weight="normal" text-anchor="start" >X1</text><text x="558" y="432" font-size="7.2" fill="#000" stroke="#000" stroke-width="0.35" text-anchor="start" letter-spacing="0.45">CRYSTAL</text><text x="558" y="440" font-size="7" fill="#7c7c7c" letter-spacing="0.3">&lt;TEXT&gt;</text><rect x="535" y="437" width="3.5" height="3.5" fill="#e03838"/><path d="M386.5 508.5 L515.5 508.5 L515.5 620.5 L996.5 620.5 L996.5 431.5" stroke="#0b280b" fill="none" stroke-width="1"/><path d="M386.5 517.5 L507.5 517.5 L507.5 637.5 L979.5 637.5 L979.5 431.5" stroke="#0b280b" fill="none" stroke-width="1"/><rect x="713.5" y="363.5" width="120" height="230" fill="#c9c9b0" stroke="#601010" stroke-width="1.2"/><text x="711" y="361" font-size="10" fill="#000" font-weight="normal" text-anchor="start" >U1</text><text x="713" y="602" font-size="7.2" fill="#000" stroke="#000" stroke-width="0.35" text-anchor="start" letter-spacing="0.45">AT89C51</text><text x="713" y="610" font-size="7" fill="#7c7c7c" letter-spacing="0.3">&lt;TEXT&gt;</text><rect x="696" y="371" width="17" height="1" fill="#601010"/><text x="705" y="369" font-size="7.2" fill="#000" stroke="#000" stroke-width="0.35" text-anchor="end" letter-spacing="0.45">19</text><text x="717" y="374" font-size="7.2" fill="#000" stroke="#000" stroke-width="0.35" text-anchor="start" letter-spacing="0.45">XTAL1</text><rect x="696" y="396" width="17" height="1" fill="#601010"/><text x="705" y="394" font-size="7.2" fill="#000" stroke="#000" stroke-width="0.35" text-anchor="end" letter-spacing="0.45">18</text><text x="717" y="399" font-size="7.2" fill="#000" stroke="#000" stroke-width="0.35" text-anchor="start" letter-spacing="0.45">XTAL2</text><rect x="696" y="431" width="17" height="1" fill="#601010"/><text x="705" y="429" font-size="7.2" fill="#000" stroke="#000" stroke-width="0.35" text-anchor="end" letter-spacing="0.45">9</text><rect x="706" y="425" width="3.5" height="3.5" fill="#e03838"/><text x="717" y="434" font-size="7.2" fill="#000" stroke="#000" stroke-width="0.35" text-anchor="start" letter-spacing="0.45">RST</text><rect x="696" y="474" width="17" height="1" fill="#601010"/><text x="705" y="472" font-size="7.2" fill="#000" stroke="#000" stroke-width="0.35" text-anchor="end" letter-spacing="0.45">29</text><rect x="706" y="468" width="3.5" height="3.5" fill="#e03838"/><text x="717" y="477" font-size="7.2" fill="#000" stroke="#000" stroke-width="0.35" text-anchor="start" letter-spacing="0.45">PSEN</text><rect x="696" y="482" width="17" height="1" fill="#601010"/><text x="705" y="480" font-size="7.2" fill="#000" stroke="#000" stroke-width="0.35" text-anchor="end" letter-spacing="0.45">30</text><rect x="706" y="476" width="3.5" height="3.5" fill="#e03838"/><text x="717" y="485" font-size="7.2" fill="#000" stroke="#000" stroke-width="0.35" text-anchor="start" letter-spacing="0.45">ALE</text><rect x="696" y="491" width="17" height="1" fill="#601010"/><text x="705" y="489" font-size="7.2" fill="#000" stroke="#000" stroke-width="0.35" text-anchor="end" letter-spacing="0.45">31</text><rect x="706" y="485" width="3.5" height="3.5" fill="#888"/><text x="717" y="494" font-size="7.2" fill="#000" stroke="#000" stroke-width="0.35" text-anchor="start" letter-spacing="0.45">EA</text><rect x="696" y="525" width="17" height="1" fill="#601010"/><text x="705" y="523" font-size="7.2" fill="#000" stroke="#000" stroke-width="0.35" text-anchor="end" letter-spacing="0.45">1</text><rect x="706" y="519" width="3.5" height="3.5" fill="#3c3ce0"/><text x="717" y="528" font-size="7.2" fill="#000" stroke="#000" stroke-width="0.35" text-anchor="start" letter-spacing="0.45">P1.0</text><rect x="696" y="534" width="17" height="1" fill="#601010"/><text x="705" y="532" font-size="7.2" fill="#000" stroke="#000" stroke-width="0.35" text-anchor="end" letter-spacing="0.45">2</text><rect x="706" y="528" width="3.5" height="3.5" fill="#3c3ce0"/><text x="717" y="537" font-size="7.2" fill="#000" stroke="#000" stroke-width="0.35" text-anchor="start" letter-spacing="0.45">P1.1</text><rect x="696" y="542" width="17" height="1" fill="#601010"/><text x="705" y="540" font-size="7.2" fill="#000" stroke="#000" stroke-width="0.35" text-anchor="end" letter-spacing="0.45">3</text><rect x="706" y="536" width="3.5" height="3.5" fill="#3c3ce0"/><text x="717" y="545" font-size="7.2" fill="#000" stroke="#000" stroke-width="0.35" text-anchor="start" letter-spacing="0.45">P1.2</text><rect x="696" y="551" width="17" height="1" fill="#601010"/><text x="705" y="549" font-size="7.2" fill="#000" stroke="#000" stroke-width="0.35" text-anchor="end" letter-spacing="0.45">4</text><rect x="706" y="545" width="3.5" height="3.5" fill="#3c3ce0"/><text x="717" y="554" font-size="7.2" fill="#000" stroke="#000" stroke-width="0.35" text-anchor="start" letter-spacing="0.45">P1.3</text><rect x="696" y="559" width="17" height="1" fill="#601010"/><text x="705" y="557" font-size="7.2" fill="#000" stroke="#000" stroke-width="0.35" text-anchor="end" letter-spacing="0.45">5</text><rect x="706" y="553" width="3.5" height="3.5" fill="#e03838"/><text x="717" y="562" font-size="7.2" fill="#000" stroke="#000" stroke-width="0.35" text-anchor="start" letter-spacing="0.45">P1.4</text><rect x="696" y="568" width="17" height="1" fill="#601010"/><text x="705" y="566" font-size="7.2" fill="#000" stroke="#000" stroke-width="0.35" text-anchor="end" letter-spacing="0.45">6</text><rect x="706" y="562" width="3.5" height="3.5" fill="#e03838"/><text x="717" y="571" font-size="7.2" fill="#000" stroke="#000" stroke-width="0.35" text-anchor="start" letter-spacing="0.45">P1.5</text><rect x="696" y="577" width="17" height="1" fill="#601010"/><text x="705" y="575" font-size="7.2" fill="#000" stroke="#000" stroke-width="0.35" text-anchor="end" letter-spacing="0.45">7</text><rect x="706" y="571" width="3.5" height="3.5" fill="#e03838"/><text x="717" y="580" font-size="7.2" fill="#000" stroke="#000" stroke-width="0.35" text-anchor="start" letter-spacing="0.45">P1.6</text><rect x="696" y="585" width="17" height="1" fill="#601010"/><text x="705" y="583" font-size="7.2" fill="#000" stroke="#000" stroke-width="0.35" text-anchor="end" letter-spacing="0.45">8</text><rect x="706" y="579" width="3.5" height="3.5" fill="#e03838"/><text x="717" y="588" font-size="7.2" fill="#000" stroke="#000" stroke-width="0.35" text-anchor="start" letter-spacing="0.45">P1.7</text><rect x="834" y="371" width="17" height="1" fill="#601010"/><text x="840" y="370" font-size="7.2" fill="#000" stroke="#000" stroke-width="0.35" text-anchor="start" letter-spacing="0.45">39</text><rect x="836" y="365" width="3.5" height="3.5" fill="#888"/><text x="829" y="374" font-size="7.2" fill="#000" stroke="#000" stroke-width="0.35" text-anchor="end" letter-spacing="0.45">P0.0/AD0</text><rect x="834" y="380" width="17" height="1" fill="#601010"/><text x="840" y="379" font-size="7.2" fill="#000" stroke="#000" stroke-width="0.35" text-anchor="start" letter-spacing="0.45">38</text><rect x="836" y="374" width="3.5" height="3.5" fill="#888"/><text x="829" y="383" font-size="7.2" fill="#000" stroke="#000" stroke-width="0.35" text-anchor="end" letter-spacing="0.45">P0.1/AD1</text><rect x="834" y="388" width="17" height="1" fill="#601010"/><text x="840" y="387" font-size="7.2" fill="#000" stroke="#000" stroke-width="0.35" text-anchor="start" letter-spacing="0.45">37</text><rect x="836" y="382" width="3.5" height="3.5" fill="#888"/><text x="829" y="391" font-size="7.2" fill="#000" stroke="#000" stroke-width="0.35" text-anchor="end" letter-spacing="0.45">P0.2/AD2</text><rect x="834" y="397" width="17" height="1" fill="#601010"/><text x="840" y="396" font-size="7.2" fill="#000" stroke="#000" stroke-width="0.35" text-anchor="start" letter-spacing="0.45">36</text><rect x="836" y="391" width="3.5" height="3.5" fill="#888"/><text x="829" y="400" font-size="7.2" fill="#000" stroke="#000" stroke-width="0.35" text-anchor="end" letter-spacing="0.45">P0.3/AD3</text><rect x="834" y="405" width="17" height="1" fill="#601010"/><text x="840" y="404" font-size="7.2" fill="#000" stroke="#000" stroke-width="0.35" text-anchor="start" letter-spacing="0.45">35</text><rect x="836" y="399" width="3.5" height="3.5" fill="#888"/><text x="829" y="408" font-size="7.2" fill="#000" stroke="#000" stroke-width="0.35" text-anchor="end" letter-spacing="0.45">P0.4/AD4</text><rect x="834" y="414" width="17" height="1" fill="#601010"/><text x="840" y="413" font-size="7.2" fill="#000" stroke="#000" stroke-width="0.35" text-anchor="start" letter-spacing="0.45">34</text><rect x="836" y="408" width="3.5" height="3.5" fill="#888"/><text x="829" y="417" font-size="7.2" fill="#000" stroke="#000" stroke-width="0.35" text-anchor="end" letter-spacing="0.45">P0.5/AD5</text><rect x="834" y="423" width="17" height="1" fill="#601010"/><text x="840" y="422" font-size="7.2" fill="#000" stroke="#000" stroke-width="0.35" text-anchor="start" letter-spacing="0.45">33</text><rect x="836" y="417" width="3.5" height="3.5" fill="#888"/><text x="829" y="426" font-size="7.2" fill="#000" stroke="#000" stroke-width="0.35" text-anchor="end" letter-spacing="0.45">P0.6/AD6</text><rect x="834" y="431" width="17" height="1" fill="#601010"/><text x="840" y="430" font-size="7.2" fill="#000" stroke="#000" stroke-width="0.35" text-anchor="start" letter-spacing="0.45">32</text><rect x="836" y="425" width="3.5" height="3.5" fill="#3c3ce0"/><text x="829" y="434" font-size="7.2" fill="#000" stroke="#000" stroke-width="0.35" text-anchor="end" letter-spacing="0.45">P0.7/AD7</text><rect x="834" y="448" width="17" height="1" fill="#601010"/><text x="840" y="447" font-size="7.2" fill="#000" stroke="#000" stroke-width="0.35" text-anchor="start" letter-spacing="0.45">21</text><rect x="836" y="442" width="3.5" height="3.5" fill="#3c3ce0"/><text x="829" y="451" font-size="7.2" fill="#000" stroke="#000" stroke-width="0.35" text-anchor="end" letter-spacing="0.45">P2.0/A8</text><rect x="834" y="457" width="17" height="1" fill="#601010"/><text x="840" y="456" font-size="7.2" fill="#000" stroke="#000" stroke-width="0.35" text-anchor="start" letter-spacing="0.45">22</text><rect x="836" y="451" width="3.5" height="3.5" fill="#3c3ce0"/><text x="829" y="460" font-size="7.2" fill="#000" stroke="#000" stroke-width="0.35" text-anchor="end" letter-spacing="0.45">P2.1/A9</text><rect x="834" y="465" width="17" height="1" fill="#601010"/><text x="840" y="464" font-size="7.2" fill="#000" stroke="#000" stroke-width="0.35" text-anchor="start" letter-spacing="0.45">23</text><rect x="836" y="459" width="3.5" height="3.5" fill="#e03838"/><text x="829" y="468" font-size="7.2" fill="#000" stroke="#000" stroke-width="0.35" text-anchor="end" letter-spacing="0.45">P2.2/A10</text><rect x="834" y="474" width="17" height="1" fill="#601010"/><text x="840" y="473" font-size="7.2" fill="#000" stroke="#000" stroke-width="0.35" text-anchor="start" letter-spacing="0.45">24</text><rect x="836" y="468" width="3.5" height="3.5" fill="#3c3ce0"/><text x="829" y="477" font-size="7.2" fill="#000" stroke="#000" stroke-width="0.35" text-anchor="end" letter-spacing="0.45">P2.3/A11</text><rect x="834" y="482" width="17" height="1" fill="#601010"/><text x="840" y="481" font-size="7.2" fill="#000" stroke="#000" stroke-width="0.35" text-anchor="start" letter-spacing="0.45">25</text><rect x="836" y="476" width="3.5" height="3.5" fill="#e03838"/><text x="829" y="485" font-size="7.2" fill="#000" stroke="#000" stroke-width="0.35" text-anchor="end" letter-spacing="0.45">P2.4/A12</text><rect x="834" y="491" width="17" height="1" fill="#601010"/><text x="840" y="490" font-size="7.2" fill="#000" stroke="#000" stroke-width="0.35" text-anchor="start" letter-spacing="0.45">26</text><rect x="836" y="485" width="3.5" height="3.5" fill="#e03838"/><text x="829" y="494" font-size="7.2" fill="#000" stroke="#000" stroke-width="0.35" text-anchor="end" letter-spacing="0.45">P2.5/A13</text><rect x="834" y="500" width="17" height="1" fill="#601010"/><text x="840" y="499" font-size="7.2" fill="#000" stroke="#000" stroke-width="0.35" text-anchor="start" letter-spacing="0.45">27</text><rect x="836" y="494" width="3.5" height="3.5" fill="#e03838"/><text x="829" y="503" font-size="7.2" fill="#000" stroke="#000" stroke-width="0.35" text-anchor="end" letter-spacing="0.45">P2.6/A14</text><rect x="834" y="508" width="17" height="1" fill="#601010"/><text x="840" y="507" font-size="7.2" fill="#000" stroke="#000" stroke-width="0.35" text-anchor="start" letter-spacing="0.45">28</text><rect x="836" y="502" width="3.5" height="3.5" fill="#3c3ce0"/><text x="829" y="511" font-size="7.2" fill="#000" stroke="#000" stroke-width="0.35" text-anchor="end" letter-spacing="0.45">P2.7/A15</text><rect x="834" y="525" width="17" height="1" fill="#601010"/><text x="840" y="524" font-size="7.2" fill="#000" stroke="#000" stroke-width="0.35" text-anchor="start" letter-spacing="0.45">10</text><rect x="836" y="519" width="3.5" height="3.5" fill="#e03838"/><text x="829" y="528" font-size="7.2" fill="#000" stroke="#000" stroke-width="0.35" text-anchor="end" letter-spacing="0.45">P3.0/RXD</text><rect x="834" y="534" width="17" height="1" fill="#601010"/><text x="840" y="533" font-size="7.2" fill="#000" stroke="#000" stroke-width="0.35" text-anchor="start" letter-spacing="0.45">11</text><rect x="836" y="528" width="3.5" height="3.5" fill="#e03838"/><text x="829" y="537" font-size="7.2" fill="#000" stroke="#000" stroke-width="0.35" text-anchor="end" letter-spacing="0.45">P3.1/TXD</text><rect x="834" y="542" width="17" height="1" fill="#601010"/><text x="840" y="541" font-size="7.2" fill="#000" stroke="#000" stroke-width="0.35" text-anchor="start" letter-spacing="0.45">12</text><rect x="836" y="536" width="3.5" height="3.5" fill="#e03838"/><text x="829" y="545" font-size="7.2" fill="#000" stroke="#000" stroke-width="0.35" text-anchor="end" letter-spacing="0.45">P3.2/INT0</text><rect x="834" y="551" width="17" height="1" fill="#601010"/><text x="840" y="550" font-size="7.2" fill="#000" stroke="#000" stroke-width="0.35" text-anchor="start" letter-spacing="0.45">13</text><rect x="836" y="545" width="3.5" height="3.5" fill="#3c3ce0"/><text x="829" y="554" font-size="7.2" fill="#000" stroke="#000" stroke-width="0.35" text-anchor="end" letter-spacing="0.45">P3.3/INT1</text><rect x="834" y="559" width="17" height="1" fill="#601010"/><text x="840" y="558" font-size="7.2" fill="#000" stroke="#000" stroke-width="0.35" text-anchor="start" letter-spacing="0.45">14</text><rect x="836" y="553" width="3.5" height="3.5" fill="#3c3ce0"/><text x="829" y="562" font-size="7.2" fill="#000" stroke="#000" stroke-width="0.35" text-anchor="end" letter-spacing="0.45">P3.4/T0</text><rect x="834" y="568" width="17" height="1" fill="#601010"/><text x="840" y="567" font-size="7.2" fill="#000" stroke="#000" stroke-width="0.35" text-anchor="start" letter-spacing="0.45">15</text><rect x="836" y="562" width="3.5" height="3.5" fill="#e03838"/><text x="829" y="571" font-size="7.2" fill="#000" stroke="#000" stroke-width="0.35" text-anchor="end" letter-spacing="0.45">P3.5/T1</text><rect x="834" y="577" width="17" height="1" fill="#601010"/><text x="840" y="576" font-size="7.2" fill="#000" stroke="#000" stroke-width="0.35" text-anchor="start" letter-spacing="0.45">16</text><rect x="836" y="571" width="3.5" height="3.5" fill="#e03838"/><text x="829" y="580" font-size="7.2" fill="#000" stroke="#000" stroke-width="0.35" text-anchor="end" letter-spacing="0.45">P3.6/WR</text><rect x="834" y="585" width="17" height="1" fill="#601010"/><text x="840" y="584" font-size="7.2" fill="#000" stroke="#000" stroke-width="0.35" text-anchor="start" letter-spacing="0.45">17</text><rect x="836" y="579" width="3.5" height="3.5" fill="#e03838"/><text x="829" y="588" font-size="7.2" fill="#000" stroke="#000" stroke-width="0.35" text-anchor="end" letter-spacing="0.45">P3.7/RD</text><path d="M850.5 431.5 L876.5 431.5" stroke="#0b280b" fill="none" stroke-width="1"/><rect x="876.5" y="428.5" width="26" height="6" fill="#d2c8b0" stroke="#703020" stroke-width="1"/><text x="873" y="425" font-size="10" fill="#000" font-weight="normal" text-anchor="start" >R1</text><text x="876" y="441" font-size="7.2" fill="#000" stroke="#000" stroke-width="0.35" text-anchor="start" letter-spacing="0.45">10k</text><text x="876" y="449" font-size="7" fill="#7c7c7c" letter-spacing="0.3">&lt;TEXT&gt;</text><rect x="865" y="424" width="3.5" height="3.5" fill="#3c3ce0"/><path d="M902.5 431.5 L936.5 431.5 L936.5 251.5 L980.5 251.5" stroke="#0b280b" fill="none" stroke-width="1"/><path d="M992.5 247.5v25h-3q-10 0-10-12.5t10-12.5z" fill="#c9c9b0" stroke="#601010" stroke-width="1"/><text x="977" y="245" font-size="10" fill="#000" font-weight="normal" text-anchor="start" >BUZ1</text><text x="978" y="279" font-size="7.2" fill="#000" stroke="#000" stroke-width="0.35" text-anchor="start" letter-spacing="0.45">BUZZER</text><text x="978" y="288" font-size="7" fill="#7c7c7c" letter-spacing="0.3">&lt;TEXT&gt;</text><rect x="968" y="262" width="3.5" height="3.5" fill="#3c3ce0"/><path d="M980.5 268.5 L962.5 268.5 L962.5 294.5 L997.5 294.5 L997.5 311.5" stroke="#0b280b" fill="none" stroke-width="1"/><rect x="988" y="311" width="18" height="1" fill="#0b280b"/><rect x="992" y="315" width="10" height="1" fill="#0b280b"/><rect x="996" y="320" width="3" height="1" fill="#0b280b"/><rect x="968" y="251" width="13" height="1" fill="#601010"/><rect x="968" y="268" width="13" height="1" fill="#601010"/><text x="960" y="326" font-size="10" fill="#000" font-weight="normal" text-anchor="start" >LCD1</text><text x="961" y="335" font-size="7.2" fill="#000" stroke="#000" stroke-width="0.35" text-anchor="start" letter-spacing="0.45">LM016L</text><text x="961" y="343" font-size="7" fill="#7c7c7c" letter-spacing="0.3">&lt;TEXT&gt;</text><path d="M953.5 333L949 341.5H958z" fill="none" stroke="#0d5a0d" stroke-width="1"/><path d="M953.5 341.5 L953.5 431.5 L988.5 431.5 L988.5 413.5" stroke="#0b280b" fill="none" stroke-width="1"/><rect x="962.5" y="345.5" width="172" height="67" fill="#c9c9b0" stroke="#601010" stroke-width="1.2"/><rect x="970.5" y="352.5" width="155" height="37" fill="#99aa00" stroke="#111" stroke-width="1.6"/><text x="977.5" y="367" style="font-family:'Liberation Mono',monospace;font-size:14.4px;font-weight:bold" fill="#111" transform="translate(0,-55) scale(1,1.15)" xml:space="preserve"> Sexist Comment</text><rect x="1109" y="357" width="6" height="12" fill="#111"/><rect x="979" y="413" width="1" height="19" fill="#601010"/><rect x="972" y="417" width="3.5" height="3.5" fill="#3c3ce0"/><text font-size="7" font-weight="bold" fill="#000" transform="translate(980 428) rotate(-90)">1</text><text font-size="7" font-weight="bold" fill="#000" transform="translate(981 409) rotate(-90)">VSS</text><rect x="988" y="413" width="1" height="19" fill="#601010"/><rect x="981" y="417" width="3.5" height="3.5" fill="#e03838"/><text font-size="7" font-weight="bold" fill="#000" transform="translate(989 428) rotate(-90)">2</text><text font-size="7" font-weight="bold" fill="#000" transform="translate(990 409) rotate(-90)">VDD</text><rect x="996" y="413" width="1" height="19" fill="#601010"/><rect x="989" y="417" width="3.5" height="3.5" fill="#3c3ce0"/><text font-size="7" font-weight="bold" fill="#000" transform="translate(997 428) rotate(-90)">3</text><text font-size="7" font-weight="bold" fill="#000" transform="translate(998 409) rotate(-90)">VEE</text><rect x="1013" y="413" width="1" height="19" fill="#601010"/><rect x="1006" y="417" width="3.5" height="3.5" fill="#e03838"/><text font-size="7" font-weight="bold" fill="#000" transform="translate(1014 428) rotate(-90)">4</text><text font-size="7" font-weight="bold" fill="#000" transform="translate(1015 409) rotate(-90)">RS</text><rect x="1022" y="413" width="1" height="19" fill="#601010"/><rect x="1015" y="417" width="3.5" height="3.5" fill="#3c3ce0"/><text font-size="7" font-weight="bold" fill="#000" transform="translate(1023 428) rotate(-90)">5</text><text font-size="7" font-weight="bold" fill="#000" transform="translate(1024 409) rotate(-90)">RW</text><rect x="1031" y="413" width="1" height="19" fill="#601010"/><rect x="1024" y="417" width="3.5" height="3.5" fill="#3c3ce0"/><text font-size="7" font-weight="bold" fill="#000" transform="translate(1032 428) rotate(-90)">6</text><text font-size="7" font-weight="bold" fill="#000" transform="translate(1033 409) rotate(-90)">E</text><rect x="1048" y="413" width="1" height="19" fill="#601010"/><rect x="1041" y="417" width="3.5" height="3.5" fill="#3c3ce0"/><text font-size="7" font-weight="bold" fill="#000" transform="translate(1049 428) rotate(-90)">7</text><text font-size="7" font-weight="bold" fill="#000" transform="translate(1050 409) rotate(-90)">D0</text><rect x="1056" y="413" width="1" height="19" fill="#601010"/><rect x="1049" y="417" width="3.5" height="3.5" fill="#3c3ce0"/><text font-size="7" font-weight="bold" fill="#000" transform="translate(1057 428) rotate(-90)">8</text><text font-size="7" font-weight="bold" fill="#000" transform="translate(1058 409) rotate(-90)">D1</text><rect x="1065" y="413" width="1" height="19" fill="#601010"/><rect x="1058" y="417" width="3.5" height="3.5" fill="#e03838"/><text font-size="7" font-weight="bold" fill="#000" transform="translate(1066 428) rotate(-90)">9</text><text font-size="7" font-weight="bold" fill="#000" transform="translate(1067 409) rotate(-90)">D2</text><rect x="1074" y="413" width="1" height="19" fill="#601010"/><rect x="1067" y="417" width="3.5" height="3.5" fill="#3c3ce0"/><text font-size="7" font-weight="bold" fill="#000" transform="translate(1075 428) rotate(-90)">10</text><text font-size="7" font-weight="bold" fill="#000" transform="translate(1076 409) rotate(-90)">D3</text><rect x="1082" y="413" width="1" height="19" fill="#601010"/><rect x="1075" y="417" width="3.5" height="3.5" fill="#e03838"/><text font-size="7" font-weight="bold" fill="#000" transform="translate(1083 428) rotate(-90)">11</text><text font-size="7" font-weight="bold" fill="#000" transform="translate(1084 409) rotate(-90)">D4</text><rect x="1091" y="413" width="1" height="19" fill="#601010"/><rect x="1084" y="417" width="3.5" height="3.5" fill="#e03838"/><text font-size="7" font-weight="bold" fill="#000" transform="translate(1092 428) rotate(-90)">12</text><text font-size="7" font-weight="bold" fill="#000" transform="translate(1093 409) rotate(-90)">D5</text><rect x="1100" y="413" width="1" height="19" fill="#601010"/><rect x="1093" y="417" width="3.5" height="3.5" fill="#e03838"/><text font-size="7" font-weight="bold" fill="#000" transform="translate(1101 428) rotate(-90)">13</text><text font-size="7" font-weight="bold" fill="#000" transform="translate(1102 409) rotate(-90)">D6</text><rect x="1108" y="413" width="1" height="19" fill="#601010"/><rect x="1101" y="417" width="3.5" height="3.5" fill="#3c3ce0"/><text font-size="7" font-weight="bold" fill="#000" transform="translate(1109 428) rotate(-90)">14</text><text font-size="7" font-weight="bold" fill="#000" transform="translate(1110 409) rotate(-90)">D7</text><path d="M1048.5 431.5 L1048.5 448.5 L850.5 448.5" stroke="#0b280b" fill="none" stroke-width="1"/><path d="M1056.5 431.5 L1056.5 457.5 L850.5 457.5" stroke="#0b280b" fill="none" stroke-width="1"/><path d="M1065.5 431.5 L1065.5 465.5 L850.5 465.5" stroke="#0b280b" fill="none" stroke-width="1"/><path d="M1074.5 431.5 L1074.5 474.5 L850.5 474.5" stroke="#0b280b" fill="none" stroke-width="1"/><path d="M1082.5 431.5 L1082.5 482.5 L850.5 482.5" stroke="#0b280b" fill="none" stroke-width="1"/><path d="M1091.5 431.5 L1091.5 491.5 L850.5 491.5" stroke="#0b280b" fill="none" stroke-width="1"/><path d="M1100.5 431.5 L1100.5 500.5 L850.5 500.5" stroke="#0b280b" fill="none" stroke-width="1"/><path d="M1108.5 431.5 L1108.5 508.5 L850.5 508.5" stroke="#0b280b" fill="none" stroke-width="1"/><path d="M1013.5 431.5 L1013.5 542.5 L850.5 542.5" stroke="#0b280b" fill="none" stroke-width="1"/><path d="M1022.5 431.5 L1022.5 551.5 L850.5 551.5" stroke="#0b280b" fill="none" stroke-width="1"/><path d="M1031.5 431.5 L1031.5 559.5 L850.5 559.5" stroke="#0b280b" fill="none" stroke-width="1"/><path d="M850.5 525.5 L867.5 525.5 L867.5 585.5 L1048.5 585.5" stroke="#0b280b" fill="none" stroke-width="1"/><path d="M850.5 534.5 L859.5 534.5 L859.5 568.5 L1048.5 568.5" stroke="#0b280b" fill="none" stroke-width="1"/><rect x="1065.5" y="561.5" width="102" height="66" fill="#c9c9b0" stroke="#601010" stroke-width="1.2"/><rect x="1091.5" y="568.5" width="69" height="52" fill="#000" stroke="#802020" stroke-width="1"/><rect x="1095" y="572" width="4" height="4" fill="#30e030"/><rect x="1048" y="568" width="18" height="1" fill="#601010"/><rect x="1054" y="562" width="3.5" height="3.5" fill="#e03838"/><text x="1069" y="571" font-size="7.2" fill="#000" stroke="#000" stroke-width="0.35" text-anchor="start" letter-spacing="0.45">RXD</text><rect x="1048" y="585" width="18" height="1" fill="#601010"/><rect x="1054" y="579" width="3.5" height="3.5" fill="#e03838"/><text x="1069" y="588" font-size="7.2" fill="#000" stroke="#000" stroke-width="0.35" text-anchor="start" letter-spacing="0.45">TXD</text><rect x="1048" y="603" width="18" height="1" fill="#601010"/><rect x="1054" y="597" width="3.5" height="3.5" fill="#e03838"/><text x="1069" y="606" font-size="7.2" fill="#000" stroke="#000" stroke-width="0.35" text-anchor="start" letter-spacing="0.45">RTS</text><rect x="1048" y="620" width="18" height="1" fill="#601010"/><rect x="1054" y="614" width="3.5" height="3.5" fill="#888"/><text x="1069" y="623" font-size="7.2" fill="#000" stroke="#000" stroke-width="0.35" text-anchor="start" letter-spacing="0.45">CTS</text></g></svg><div class="a" style="left:18px;top:352px;width:436px;height:4px;background:linear-gradient(rgba(0,0,0,.16),rgba(0,0,0,0))"></div><div class="a" style="left:452px;top:114px;width:3px;height:240px;background:linear-gradient(90deg,rgba(0,0,0,.12),rgba(0,0,0,0))"></div><div class="a" style="left:18px;top:112px;width:434px;height:240px;background:#fff;border-top:1px solid #707070;border-right:1px solid #c0c0c0"></div><div class="a" style="left:18px;top:113px;width:433px;height:30px;background:#fff"></div><div class="a" style="left:18px;top:143px;width:433px;height:4px;background:linear-gradient(#d0d0d0,#a0a0a0)"></div><div class="t" style="left:26px;top:122px;font-size:12px;color:#222">Virtual Terminal</div><div class="a" style="left:432px;top:120px;width:19px;height:19px;background:#d54a4a"></div><svg class="a" style="left:432px;top:120px" width="19" height="19"><path d="M7 7l5 5M12 7l-5 5" stroke="#fff" stroke-width="1.8"/></svg><div class="a" style="left:22px;top:147px;width:409px;height:203px;background:#000"></div><div class="a" style="left:431px;top:147px;width:18px;height:203px;background:#efefef;border-left:1px solid #fff"></div><svg class="a" style="left:431px;top:147px" width="18" height="203"><path d="M5 12l4-4 4 4" stroke="#aaa" stroke-width="1.5" fill="none"/><path d="M5 190l4 4 4-4" stroke="#aaa" stroke-width="1.5" fill="none"/></svg><div class="a" style="left:449px;top:147px;width:3px;height:205px;background:#c8c8c8"></div><div class="a" style="left:19px;top:350px;width:432px;height:2px;background:#fff"></div><div class="t" style="left:22px;top:147px;font-size:13px;font-family:&quot;Liberation Mono&quot;,monospace;font-weight:bold;color:#36f036">13578</div><div class="a" style="left:62px;top:147px;width:1px;height:12px;background:#eee"></div><div class="t" style="left:1073px;top:652px;font-size:20px;color:rgba(140,140,135,.5)">Activate Windows</div><div class="t" style="left:1073px;top:676px;font-size:15px;color:rgba(140,140,135,.5)">Go to Settings to activate Windows.</div></body></html>
